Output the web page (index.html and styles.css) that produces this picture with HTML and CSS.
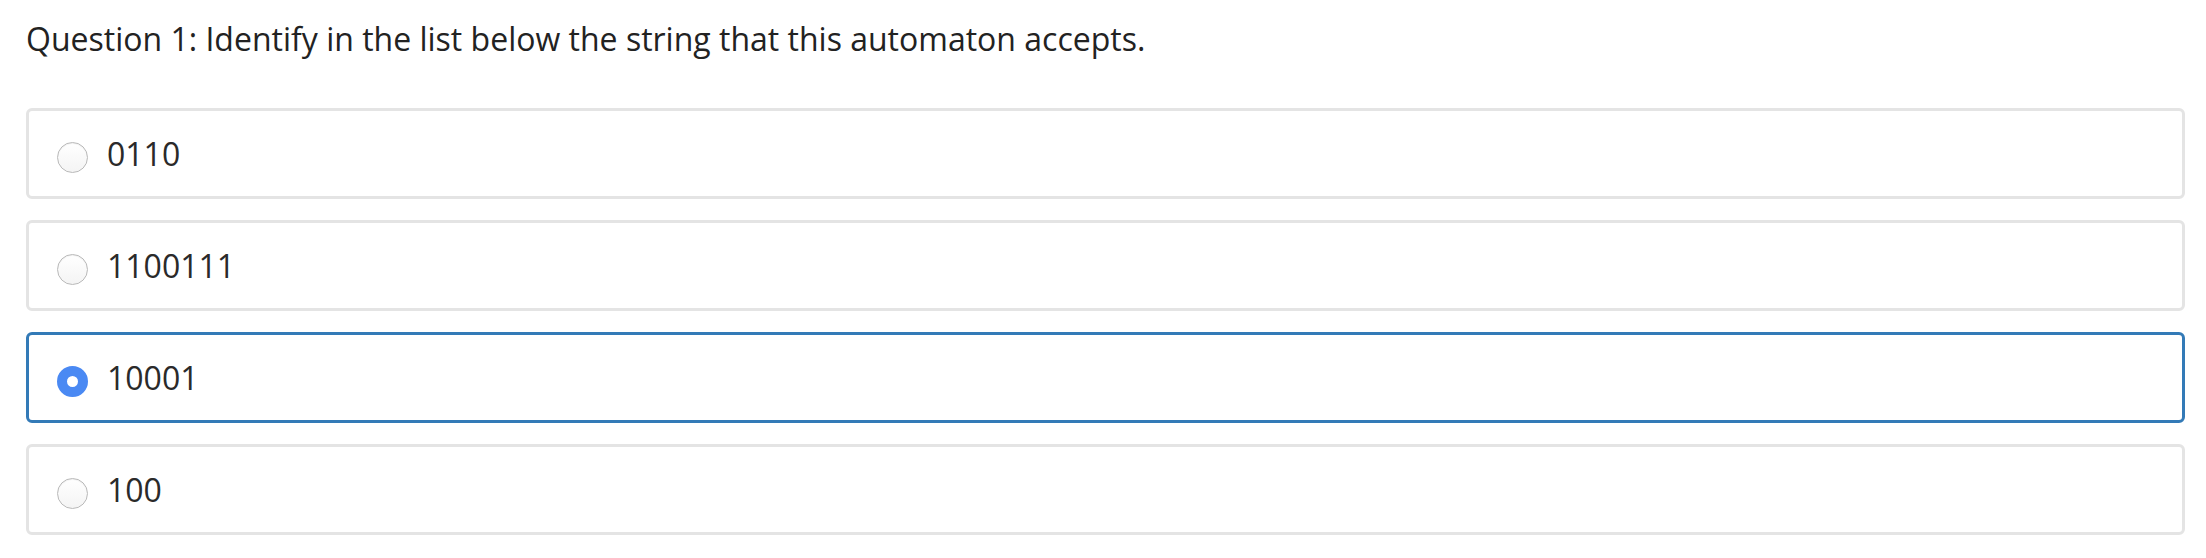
FILE: index.html
```html
<!DOCTYPE html>
<html lang="en">
<head>
<meta charset="utf-8">
<title>Question 1</title>
<link rel="stylesheet" href="styles.css">
</head>
<body>
<div class="question">
  <div class="prompt">Question 1: Identify in the list below the string that this automaton accepts.</div>
  <div class="options">
    <label class="option"><input type="radio" name="q1" class="radio"><span class="label">0110</span></label>
    <label class="option"><input type="radio" name="q1" class="radio"><span class="label">1100111</span></label>
    <label class="option selected"><input type="radio" name="q1" class="radio" checked><span class="label">10001</span></label>
    <label class="option"><input type="radio" name="q1" class="radio"><span class="label">100</span></label>
  </div>
</div>
</body>
</html>
```

FILE: styles.css
```css
html, body {
  margin: 0;
  padding: 0;
  background: #ffffff;
}

body {
  font-family: "Open Sans", "Liberation Sans", sans-serif;
  font-size: 32px;
  line-height: 44px;
  color: #222222;
}

.question {
  padding: 17px 21px 0 26px;
}

.prompt {
  margin-bottom: 47px;
}

.options {
  display: flex;
  flex-direction: column;
  gap: 21px;
}

.option {
  display: flex;
  align-items: center;
  height: 91px;
  box-sizing: border-box;
  border: 3px solid #e4e4e4;
  border-radius: 6px;
  padding: 0 0 0 28px;
  cursor: pointer;
}

.option.selected {
  border-color: #337ab7;
}

.radio {
  appearance: none;
  -webkit-appearance: none;
  margin: 8px 19px 0 0;
  width: 31px;
  height: 31px;
  border-radius: 50%;
  border: 1.5px solid #b9b9b9;
  box-sizing: border-box;
  background: linear-gradient(#ffffff, #f4f4f4);
  box-shadow: inset 0 1px 1px rgba(0,0,0,0.06);
  flex: none;
}

.radio:checked {
  border: 10.5px solid #4a89f3;
  background: #ffffff;
  box-shadow: none;
}

.label {
  color: #2a2a2a;
}
```
